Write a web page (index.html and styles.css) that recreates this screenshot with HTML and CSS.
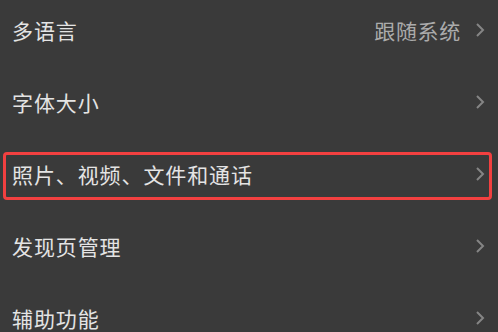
FILE: index.html
```html
<!DOCTYPE html>
<html lang="zh-CN">
<head>
  <meta charset="UTF-8">
  <meta name="viewport" content="width=device-width, initial-scale=1.0">
  <title>通用设置</title>
  <link rel="stylesheet" href="styles.css">
</head>
<body>
  <div class="settings">
    <div class="row">
      <span class="label">多语言</span>
      <span class="value">跟随系统</span>
      <svg class="arrow" viewBox="0 0 10 16"><polyline points="2,2 8,8 2,14"/></svg>
    </div>
    <div class="row">
      <span class="label">字体大小</span>
      <svg class="arrow" viewBox="0 0 10 16"><polyline points="2,2 8,8 2,14"/></svg>
    </div>
    <div class="row marked">
      <span class="label">照片、视频、文件和通话</span>
      <svg class="arrow" viewBox="0 0 10 16"><polyline points="2,2 8,8 2,14"/></svg>
    </div>
    <div class="row">
      <span class="label">发现页管理</span>
      <svg class="arrow" viewBox="0 0 10 16"><polyline points="2,2 8,8 2,14"/></svg>
    </div>
    <div class="row">
      <span class="label">辅助功能</span>
      <svg class="arrow" viewBox="0 0 10 16"><polyline points="2,2 8,8 2,14"/></svg>
    </div>
  </div>
</body>
</html>
```

FILE: styles.css
```css
html, body {
  margin: 0;
  padding: 0;
  background-color: #3a3a3a;
  overflow: hidden;
}
body {
  font-family: "Noto Sans CJK SC", "Noto Sans", sans-serif;
  height: 332px;
}
.settings {
  margin-top: -6px;
}
.row {
  height: 72px;
  display: flex;
  align-items: center;
  padding: 0 12px 0 12px;
  position: relative;
}
.label {
  flex: 1;
  font-size: 21px;
  color: #e4e4e4;
  letter-spacing: 0.9px;
}
.value {
  font-size: 21px;
  color: #ababab;
  margin-right: 14px;
  letter-spacing: 0.7px;
}
.arrow {
  width: 10px;
  height: 16px;
  margin-right: 1px;
}
.arrow polyline {
  fill: none;
  stroke: #858585;
  stroke-width: 2;
}
.marked::after {
  content: "";
  position: absolute;
  left: 3px;
  right: 6px;
  top: 14px;
  bottom: 10px;
  border: 3px solid #f24040;
  border-radius: 4px;
}
```
